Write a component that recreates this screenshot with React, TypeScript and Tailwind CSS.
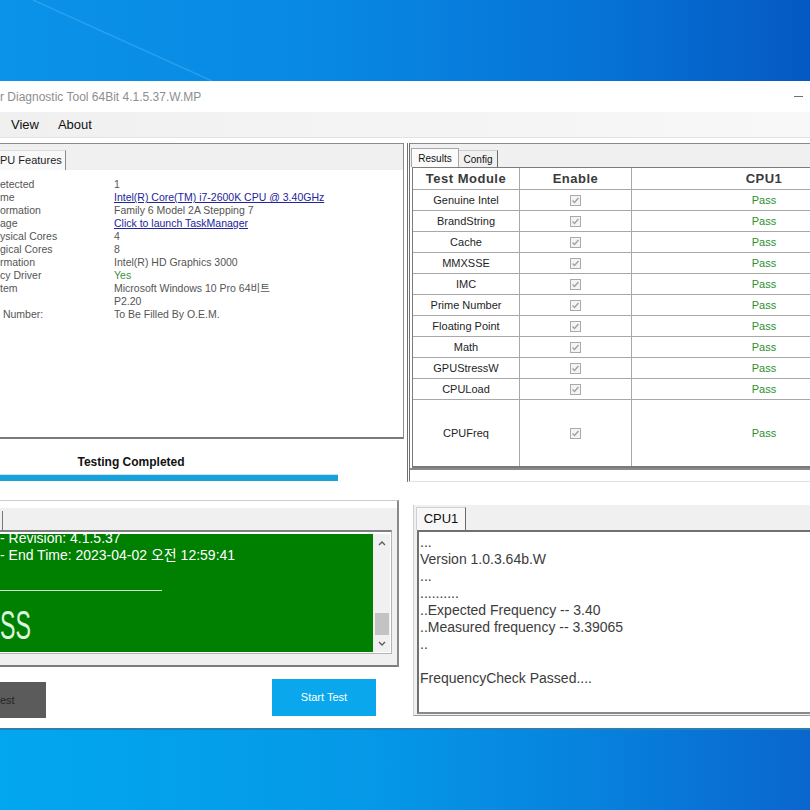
import React from "react";

const infoRows: { label: string; value: React.ReactNode }[] = [
  { label: "etected", value: "1" },
  {
    label: "me",
    value: <span className="text-[#23239a] underline">Intel(R) Core(TM) i7-2600K CPU @ 3.40GHz</span>,
  },
  { label: "ormation", value: "Family 6 Model 2A Stepping 7" },
  { label: "age", value: <span className="text-[#23239a] underline">Click to launch TaskManager</span> },
  { label: "ysical Cores", value: "4" },
  { label: "gical Cores", value: "8" },
  { label: "rmation", value: "Intel(R) HD Graphics 3000" },
  { label: "cy Driver", value: <span className="text-[#3c8f3c]">Yes</span> },
  { label: "tem", value: "Microsoft Windows 10 Pro 64비트" },
  { label: "", value: "P2.20" },
  { label: "\u00a0Number:", value: "To Be Filled By O.E.M." },
];

const modules = [
  "Genuine Intel",
  "BrandString",
  "Cache",
  "MMXSSE",
  "IMC",
  "Prime Number",
  "Floating Point",
  "Math",
  "GPUStressW",
  "CPULoad",
];

const logLines = [
  "...",
  "Version 1.0.3.64b.W",
  "...",
  "..........",
  "..Expected Frequency -- 3.40",
  "..Measured frequency -- 3.39065",
  "..",
  "\u00a0",
  "FrequencyCheck Passed....",
];

function Check() {
  return (
    <span className="w-[11px] h-[11px] border border-[#aaaaaa] bg-[#f4f4f4] flex items-center justify-center">
      <svg width="9" height="9" viewBox="0 0 9 9">
        <path d="M1.5 4.5 L3.5 6.5 L7.5 2" fill="none" stroke="#a2a2a2" strokeWidth="1.4" />
      </svg>
    </span>
  );
}

function Row({ name, tall }: { name: string; tall?: boolean }) {
  return (
    <div
      className={
        "grid grid-cols-[107px_112px_264px] " +
        (tall ? "h-[68px] border-b-2 border-[#7a7a7a]" : "h-[21px] border-b border-[#a8a8a8]")
      }
    >
      <div className="border-r border-[#a8a8a8] flex items-center justify-center text-[11px] text-[#1e1e1e]">
        {name}
      </div>
      <div className="border-r border-[#a8a8a8] flex items-center justify-center">
        <Check />
      </div>
      <div className="flex items-center justify-center text-[11px] text-[#2f8f2f]">Pass</div>
    </div>
  );
}

export default function App() {
  return (
    <div className="w-[810px] h-[810px] overflow-hidden flex flex-col font-['Liberation_Sans','Noto_Sans_CJK_KR',sans-serif]">
      {/* desktop top */}
      <div className="h-[81px] shrink-0 relative bg-[linear-gradient(90deg,#0a93e8_0%,#0888e3_40%,#0672d6_75%,#0459c2_100%)]">
        <svg className="absolute inset-0" width="810" height="81">
          <line x1="33" y1="0" x2="212" y2="81" stroke="#5fc0ff" strokeOpacity="0.35" strokeWidth="1.5" />
        </svg>
      </div>

      {/* window */}
      <div className="h-[647px] shrink-0 bg-white flex flex-col">
        {/* title bar */}
        <div className="h-[31px] flex items-center justify-between text-[12px] text-[#8e8e8e]">
          <span>r Diagnostic Tool 64Bit 4.1.5.37.W.MP</span>
          <span className="w-[9px] h-[1px] bg-[#707070] mr-[7px]" />
        </div>
        {/* menu */}
        <div className="h-[26px] flex items-center text-[13px] text-[#111] bg-[linear-gradient(90deg,#f0f0f0,#f8f8f8)] border-b border-[#e3e3e3]">
          <span className="ml-[11px]">View</span>
          <span className="ml-[19px]">About</span>
        </div>

        {/* body */}
        <div className="flex-1 flex min-h-0">
          {/* left column */}
          <div className="w-[404px] shrink-0 flex flex-col pt-[5px]">
            <div className="h-[296px] flex flex-col border-t border-r border-[#8c8c8c]">
              <div className="h-[26px] bg-[#f0f0f0] flex items-end">
                <div className="h-[20px] w-[66px] bg-[#f8f8f8] border-t border-[#dcdcdc] border-r border-r-[#8a8a8a] flex items-center text-[11px] text-[#1e1e1e]">
                  PU Features
                </div>
              </div>
              <div className="flex-1 bg-white border-b-2 border-[#7a7a7a] pt-[8px] text-[10.5px] leading-[13px] text-[#555]">
                {infoRows.map((r, i) => (
                  <div key={i} className="grid grid-cols-[114px_1fr] h-[13px]">
                    <span>{r.label}</span>
                    <span>{r.value}</span>
                  </div>
                ))}
              </div>
            </div>

            {/* status */}
            <div className="h-[44px] flex flex-col">
              <div className="w-[262px] text-center text-[12px] leading-[14px] font-bold text-[#111] mt-[16px]">
                Testing Completed
              </div>
              <div className="mt-[5px] w-[338px] border-t border-[#cfe3ec]">
                <div className="h-[6px] bg-[#17a2dc]" />
              </div>
            </div>

            {/* log panel */}
            <div className="mt-[17px] h-[167px] w-[399px] flex flex-col border-t border-[#cdcdcd] border-r-2 border-r-[#8a8a8a] pt-[7px]">
              <div className="flex-1 flex flex-col bg-[#f0f0f0] border-b-2 border-[#7c7c7c]">
                <div className="h-[22px] flex items-end">
                  <div className="h-[19px] w-[3px] border-r border-[#777]" />
                </div>
                <div className="h-[124px] w-[392px] flex bg-white border-t-2 border-[#808080] border-r border-b border-r-[#b4b4b4] border-b-[#b4b4b4] pt-[2px] pb-[1px]">
                  <div className="w-[373px] h-full bg-[#008000] overflow-hidden text-white text-[14px] leading-[17px]">
                    <div className="mt-[-4px]">- Revision: 4.1.5.37</div>
                    <div>- End Time: 2023-04-02 오전 12:59:41</div>
                    <div className="mt-[26px] h-[1px] w-[162px] bg-[#cfe9cf]" />
                    <div className="mt-[14px] text-[40px] leading-none text-[#dcf6dc] scale-x-[0.58] origin-left">
                      SS
                    </div>
                  </div>
                  <div className="w-[17px] h-full bg-[#f0f0f0] flex flex-col items-center">
                    <div className="h-[17px] flex items-center justify-center">
                      <svg width="8" height="6" viewBox="0 0 8 6">
                        <path d="M1 5 L4 2 L7 5" fill="none" stroke="#5a5a5a" strokeWidth="1.3" />
                      </svg>
                    </div>
                    <div className="flex-1 w-full flex flex-col justify-end items-center">
                      <div className="h-[22px] w-[14px] bg-[#c3c3c3]" />
                    </div>
                    <div className="h-[17px] flex items-center justify-center">
                      <svg width="8" height="6" viewBox="0 0 8 6">
                        <path d="M1 1 L4 4 L7 1" fill="none" stroke="#5a5a5a" strokeWidth="1.3" />
                      </svg>
                    </div>
                  </div>
                </div>
              </div>
            </div>

            {/* buttons */}
            <div className="mt-[12px] flex items-start">
              <div className="mt-[3px] w-[46px] h-[36px] bg-[#5b5b5b] flex items-center text-[11px] text-[#262626]">
                est
              </div>
              <div className="ml-[226px] w-[104px] h-[37px] bg-[#0aa7ec] flex items-center justify-center text-[11px] text-white">
                Start Test
              </div>
            </div>
          </div>

          {/* right column */}
          <div className="w-[420px] shrink-0 ml-[3px] flex flex-col pt-[5px]">
            <div className="h-[339px] flex flex-col border-l-[3px] border-double border-[#6f6f6f] border-b border-b-[#e2e2e2]">
              <div className="flex flex-col border-t border-[#8a8a8a] border-b-2 border-b-[#8a8a8a]">
                <div className="h-[23px] bg-[#f0f0f0] flex items-end pl-[1px]">
                  <div className="h-[19px] w-[48px] bg-[#fbfbfb] border-t border-l border-r border-[#a8a8a8] flex items-center justify-center text-[10px] text-[#111]">
                    Results
                  </div>
                  <div className="h-[17px] w-[39px] border-t border-[#cfcfcf] border-r border-r-[#6a6a6a] flex items-center justify-center text-[10px] text-[#111]">
                    Config
                  </div>
                </div>
                <div className="pl-[2px] bg-white">
                  <div className="border-t border-l border-[#7c7c7c]">
                    <div className="grid grid-cols-[107px_112px_264px] h-[22px] border-b border-[#a8a8a8] text-[13px] font-bold tracking-[0.5px] text-[#3a3a3a]">
                      <div className="border-r border-[#a8a8a8] flex items-center justify-center">Test Module</div>
                      <div className="border-r border-[#a8a8a8] flex items-center justify-center">Enable</div>
                      <div className="flex items-center justify-center">CPU1</div>
                    </div>
                    {modules.map((m) => (
                      <Row key={m} name={m} />
                    ))}
                    <Row name="CPUFreq" tall />
                  </div>
                </div>
              </div>
            </div>

            <div className="mt-[23px] ml-[6px] h-[211px] flex flex-col bg-[#f0f0f0] border-l border-[#cfcfcf] border-b border-b-[#9a9a9a]">
              <div className="h-[25px] flex items-end pl-[2px]">
                <div className="h-[23px] w-[50px] bg-[#f7f7f7] border-t border-l border-[#d0d0d0] border-r border-r-[#6a6a6a] flex items-center justify-center text-[13px] text-[#111]">
                  CPU1
                </div>
              </div>
              <div className="flex-1 ml-[3px] mb-[1px] bg-white border-t-2 border-l-2 border-[#707070] border-b-2 border-b-[#8a8a8a] pt-[2px] pl-[1px] text-[14px] leading-[17px] text-[#3c3c3c]">
                {logLines.map((l, i) => (
                  <div key={i}>{l}</div>
                ))}
              </div>
            </div>
          </div>
        </div>
      </div>

      {/* desktop bottom */}
      <div className="flex-1 border-t-2 border-[#2a80b5] bg-[linear-gradient(90deg,#02a7ef_0%,#0599e8_45%,#0780dc_75%,#0a66cd_100%)]" />
    </div>
  );
}
